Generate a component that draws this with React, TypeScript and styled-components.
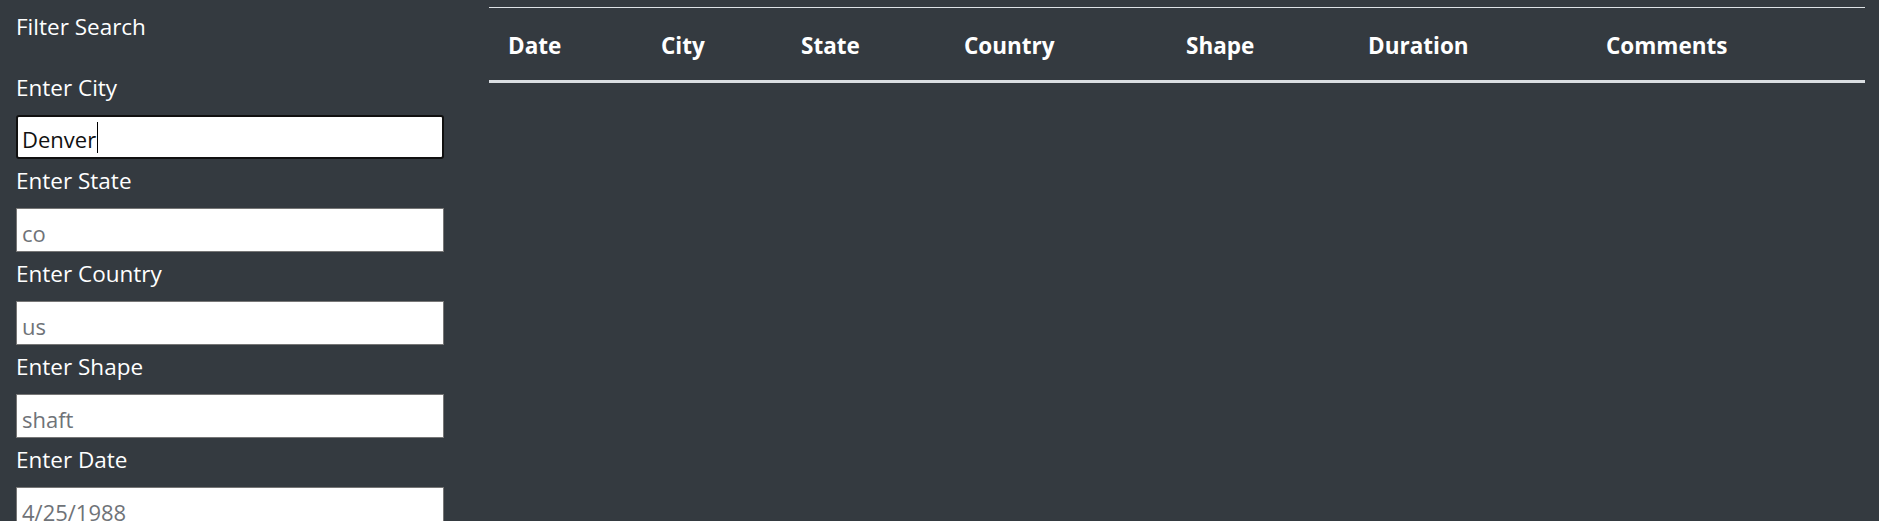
import React from "react";
import styled, { createGlobalStyle } from "styled-components";

const Global = createGlobalStyle`
  html, body {
    margin: 0;
    padding: 0;
    background: #343a40;
  }
  body {
    font-family: "Open Sans", "Noto Sans", Arial, sans-serif;
    color: #fff;
    min-height: 521px;
    overflow: hidden;
  }
  * { box-sizing: border-box; }
`;

const Page = styled.div`
  display: flex;
  align-items: flex-start;
  min-height: 521px;
  background: #343a40;
`;

const Sidebar = styled.form`
  display: flex;
  flex-direction: column;
  width: 428px;
  margin-left: 16px;
  flex: none;
`;

const Title = styled.div`
  font-size: 22.5px;
  line-height: 30px;
  height: 66px;
  padding-top: 12px;
  color: #fff;
`;

const Label = styled.label`
  display: block;
  font-size: 22.5px;
  line-height: 30px;
  height: 49px;
  padding-top: 7px;
  color: #fff;
`;

const Field = styled.div`
  position: relative;
  height: 44px;
`;

const Input = styled.input<{ $focused?: boolean }>`
  display: block;
  width: 100%;
  height: 44px;
  margin: 0;
  font-family: "Open Sans", "Noto Sans", Arial, sans-serif;
  font-size: 22px;
  color: #111;
  background: #fff;
  border: ${(p) => (p.$focused ? "2px solid #101010" : "1px solid #767676")};
  border-radius: ${(p) => (p.$focused ? "3px" : "0")};
  padding: ${(p) => (p.$focused ? "4px 4px 0 4px" : "5px 5px 0 5px")};
  outline: none;
  caret-color: transparent;
  &::placeholder {
    color: #6f7378;
    opacity: 1;
  }
`;

const Mirror = styled.div`
  position: absolute;
  left: 0;
  top: 0;
  height: 100%;
  display: flex;
  align-items: center;
  padding-left: 6px;
  pointer-events: none;
  font-family: "Open Sans", "Noto Sans", Arial, sans-serif;
  font-size: 22px;
`;

const Ghost = styled.span`
  visibility: hidden;
  white-space: pre;
`;

const Caret = styled.span`
  display: block;
  width: 1px;
  height: 31px;
  background: #000;
  margin-left: 1px;
`;

const Main = styled.main`
  flex: 1;
  margin-left: 45px;
  margin-right: 14px;
  padding-top: 7px;
`;

const Table = styled.table`
  width: 100%;
  border-collapse: collapse;
  table-layout: fixed;
  color: #fff;
`;

const HeadCell = styled.th`
  text-align: left;
  font-weight: 700;
  font-size: 22.5px;
  line-height: 30px;
  padding: 23px 0 19px 19px;
  border-top: 1px solid #dee2e6;
  border-bottom: 3px solid #dadee2;
  white-space: nowrap;
`;

const columns = [
  { label: "Date", width: 153 },
  { label: "City", width: 140 },
  { label: "State", width: 163 },
  { label: "Country", width: 222 },
  { label: "Shape", width: 182 },
  { label: "Duration", width: 238 },
  { label: "Comments", width: 278 },
];

const filters = [
  { id: "state", label: "Enter State", placeholder: "co" },
  { id: "country", label: "Enter Country", placeholder: "us" },
  { id: "shape", label: "Enter Shape", placeholder: "shaft" },
  { id: "date", label: "Enter Date", placeholder: "4/25/1988" },
];

export default function App() {
  const [city, setCity] = React.useState("Denver");
  return (
    <>
      <Global />
      <Page>
        <Sidebar onSubmit={(e) => e.preventDefault()}>
          <Title>Filter Search</Title>
          <Label htmlFor="city">Enter City</Label>
          <Field>
            <Input
              id="city"
              $focused
              value={city}
              onChange={(e) => setCity(e.target.value)}
            />
            <Mirror aria-hidden="true">
              <Ghost>{city}</Ghost>
              <Caret />
            </Mirror>
          </Field>
          {filters.map((f) => (
            <React.Fragment key={f.id}>
              <Label htmlFor={f.id}>{f.label}</Label>
              <Field>
                <Input id={f.id} placeholder={f.placeholder} />
              </Field>
            </React.Fragment>
          ))}
        </Sidebar>
        <Main>
          <Table>
            <colgroup>
              {columns.map((c) => (
                <col key={c.label} style={{ width: c.width }} />
              ))}
            </colgroup>
            <thead>
              <tr>
                {columns.map((c) => (
                  <HeadCell key={c.label}>{c.label}</HeadCell>
                ))}
              </tr>
            </thead>
            <tbody />
          </Table>
        </Main>
      </Page>
    </>
  );
}
